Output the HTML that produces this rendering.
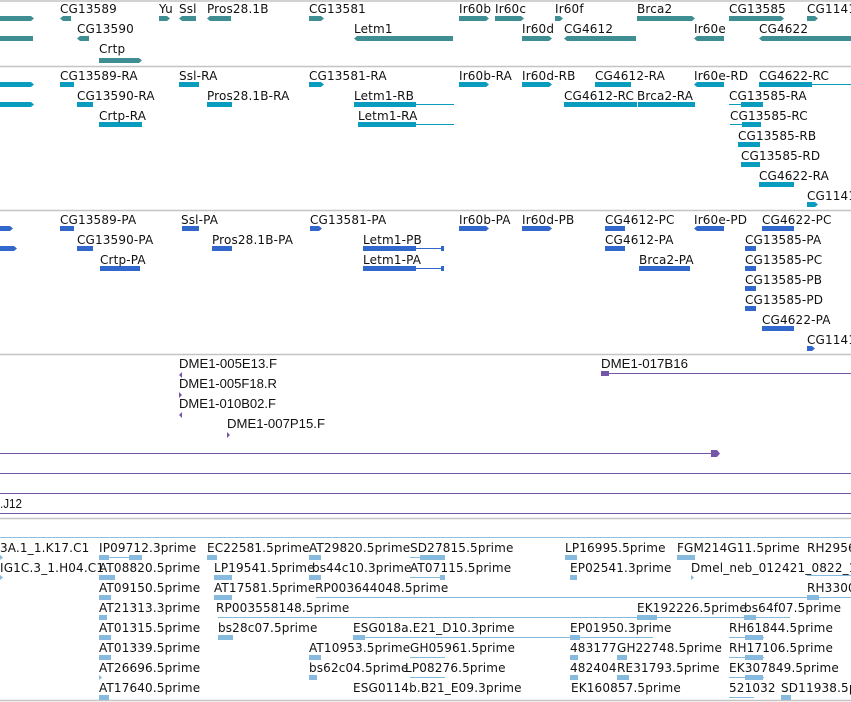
<!DOCTYPE html>
<html><head><meta charset="utf-8"><style>
html,body{margin:0;padding:0;background:#fff;width:851px;height:702px;overflow:hidden}
svg{display:block}
text{font-family:"DejaVu Sans","Liberation Sans",sans-serif;font-size:12px;letter-spacing:0.15px;fill:#111}
.c text{font-family:"Liberation Sans",sans-serif;font-size:12.5px;letter-spacing:0}
</style></head><body>
<svg width="851" height="702" viewBox="0 0 851 702">
<g stroke="#c4c4c4" stroke-width="1.5">
<line x1="0" y1="1" x2="851" y2="1"/><line x1="0" y1="66.5" x2="851" y2="66.5"/>
<line x1="0" y1="210.5" x2="851" y2="210.5"/><line x1="0" y1="354.5" x2="851" y2="354.5"/>
<line x1="0" y1="518.5" x2="851" y2="518.5"/><line x1="0" y1="700.5" x2="851" y2="700.5"/>
</g>
<line x1="0" y1="537.5" x2="851" y2="537.5" stroke="#8fbfdf" stroke-width="1"/>

<g fill="#3f8e94">
<rect x="0" y="16" width="31" height="5"/><polygon points="31,16 34,18.5 31,21"/>
<polygon points="60,18.5 63,16 71,16 71,21 63,21"/>
<rect x="159" y="16" width="8" height="5"/><polygon points="167,16 170,18.5 167,21"/>
<polygon points="179,18.5 182,16 196,16 196,21 182,21"/>
<polygon points="207,18.5 210,16 231,16 231,21 210,21"/>
<polygon points="309,16 321,16 324,18.5 321,21 309,21"/>
<polygon points="459,16 486,16 489,18.5 486,21 459,21"/>
<polygon points="495,16 521,16 524,18.5 521,21 495,21"/>
<polygon points="555,16 560,16 563,18.5 560,21 555,21"/>
<polygon points="637,16 692,16 695,18.5 692,21 637,21"/>
<polygon points="729,16 781,16 784,18.5 781,21 729,21"/>
<polygon points="807,16 815,16 818,18.5 815,21 807,21"/>
<polygon points="77,38.5 80,36 89,36 89,41 80,41"/>
<polygon points="354,38.5 357,36 453,36 453,41 357,41"/>
<polygon points="0,36 33,36 33,41 0,41"/>
<polygon points="522,36 549,36 552,38.5 549,41 522,41"/>
<polygon points="564,38.5 567,36 636,36 636,41 567,41"/>
<polygon points="694,38.5 697,36 724,36 724,41 697,41"/>
<polygon points="759,38.5 762,36 851,36 851,41 762,41"/>
<polygon points="99,58 139,58 142,60.5 139,63 99,63"/>
</g>
<text x="60" y="13">CG13589</text><text x="159" y="13">Yu</text><text x="179" y="13">Ssl</text><text x="207" y="13">Pros28.1B</text><text x="309" y="13">CG13581</text><text x="459" y="13">Ir60b</text><text x="495" y="13">Ir60c</text><text x="555" y="13">Ir60f</text><text x="637" y="13">Brca2</text><text x="729" y="13">CG13585</text><text x="807" y="13">CG1141</text>
<text x="77" y="33">CG13590</text><text x="354" y="33">Letm1</text><text x="522" y="33">Ir60d</text><text x="564" y="33">CG4612</text><text x="694" y="33">Ir60e</text><text x="759" y="33">CG4622</text>
<text x="99" y="53">Crtp</text>

<g fill="#0a9cbf">
<rect x="0" y="82" width="31" height="5"/><polygon points="31,82 34,84.5 31,87"/>
<rect x="60" y="82" width="14" height="5"/>
<rect x="179" y="82" width="20" height="5"/>
<polygon points="309,82 321,82 324,84.5 321,87 309,87"/>
<polygon points="459,82 486,82 489,84.5 486,87 459,87"/>
<polygon points="522,82 549,82 552,84.5 549,87 522,87"/>
<rect x="595" y="82" width="36" height="5"/>
<polygon points="694,84.5 697,82 724,82 724,87 697,87"/>
<rect x="759" y="82" width="53" height="5"/><rect x="812" y="84" width="39" height="1"/>
<rect x="0" y="102" width="31" height="5"/><polygon points="31,102 34,104.5 31,107"/>
<rect x="77" y="102" width="16" height="5"/>
<rect x="207" y="102" width="25" height="5"/>
<rect x="354" y="102" width="62" height="5"/><rect x="416" y="104" width="38" height="1"/>
<rect x="564" y="102" width="73" height="5"/><rect x="638" y="102" width="57" height="5"/>
<rect x="729" y="104" width="12" height="1"/><rect x="741" y="102" width="22" height="5"/>
<rect x="99" y="122" width="43" height="5"/>
<rect x="358" y="122" width="58" height="5"/><rect x="416" y="124" width="38" height="1"/>
<rect x="730" y="124" width="12" height="1"/><rect x="742" y="122" width="19" height="5"/>
<rect x="738" y="142" width="22" height="5"/>
<rect x="741" y="162" width="19" height="5"/>
<rect x="759" y="182" width="35" height="5"/>
<polygon points="807,202 815,202 818,204.5 815,207 807,207"/>
</g>
<text x="60" y="80">CG13589-RA</text><text x="179" y="80">Ssl-RA</text><text x="309" y="80">CG13581-RA</text><text x="459" y="80">Ir60b-RA</text><text x="522" y="80">Ir60d-RB</text><text x="595" y="80">CG4612-RA</text><text x="694" y="80">Ir60e-RD</text><text x="759" y="80">CG4622-RC</text>
<text x="77" y="100">CG13590-RA</text><text x="207" y="100">Pros28.1B-RA</text><text x="354" y="100">Letm1-RB</text><text x="564" y="100">CG4612-RC</text><text x="637" y="100">Brca2-RA</text><text x="729" y="100">CG13585-RA</text>
<text x="99" y="120">Crtp-RA</text><text x="358" y="120">Letm1-RA</text><text x="730" y="120">CG13585-RC</text>
<text x="738" y="140">CG13585-RB</text><text x="741" y="160">CG13585-RD</text><text x="759" y="180">CG4622-RA</text><text x="807" y="200">CG1141</text>

<g fill="#3268cc">
<polygon points="0,226 10,226 13,228.5 10,231 0,231"/>
<rect x="60" y="226" width="14" height="5"/>
<rect x="182" y="226" width="17" height="5"/>
<polygon points="310,226 319,226 322,228.5 319,231 310,231"/>
<polygon points="459,226 486,226 489,228.5 486,231 459,231"/>
<polygon points="522,226 549,226 552,228.5 549,231 522,231"/>
<rect x="605" y="226" width="20" height="5"/>
<polygon points="694,228.5 697,226 724,226 724,231 697,231"/>
<rect x="762" y="226" width="32" height="5"/>
<polygon points="0,246 14,246 17,248.5 14,251 0,251"/>
<rect x="77" y="246" width="16" height="5"/>
<rect x="212" y="246" width="20" height="5"/>
<rect x="363" y="246" width="53" height="5"/><rect x="416" y="248" width="28" height="1"/><rect x="441" y="246" width="3" height="5"/>
<rect x="605" y="246" width="20" height="5"/>
<rect x="745" y="246" width="11" height="5"/>
<rect x="100" y="266" width="40" height="5"/>
<rect x="363" y="266" width="53" height="5"/><rect x="416" y="268" width="28" height="1"/><rect x="441" y="266" width="3" height="5"/>
<rect x="639" y="266" width="51" height="5"/>
<rect x="745" y="266" width="11" height="5"/>
<rect x="745" y="286" width="11" height="5"/>
<rect x="745" y="306" width="11" height="5"/>
<rect x="762" y="326" width="32" height="5"/>
<polygon points="807,346 812,346 815,348.5 812,351 807,351"/>
</g>
<text x="60" y="224">CG13589-PA</text><text x="181" y="224">Ssl-PA</text><text x="310" y="224">CG13581-PA</text><text x="459" y="224">Ir60b-PA</text><text x="522" y="224">Ir60d-PB</text><text x="605" y="224">CG4612-PC</text><text x="694" y="224">Ir60e-PD</text><text x="762" y="224">CG4622-PC</text>
<text x="77" y="244">CG13590-PA</text><text x="212" y="244">Pros28.1B-PA</text><text x="363" y="244">Letm1-PB</text><text x="605" y="244">CG4612-PA</text><text x="745" y="244">CG13585-PA</text>
<text x="100" y="264">Crtp-PA</text><text x="363" y="264">Letm1-PA</text><text x="639" y="264">Brca2-PA</text><text x="745" y="264">CG13585-PC</text>
<text x="745" y="284">CG13585-PB</text><text x="745" y="304">CG13585-PD</text><text x="762" y="324">CG4622-PA</text><text x="807" y="344">CG1141</text>

<g fill="#7656a8">
<polygon points="179,375 182,372 182,378"/>
<polygon points="179,392 182,395 179,398"/>
<polygon points="179,415 182,412 182,418"/>
<polygon points="227,432 230,435 227,438"/>
<rect x="601" y="371" width="8" height="5"/><rect x="609" y="373" width="242" height="1"/>
<rect x="0" y="453" width="712" height="1"/><polygon points="711,450 717,450 720,453.5 717,457 711,457"/>
<rect x="0" y="473" width="851" height="1"/><rect x="0" y="493" width="851" height="1"/><rect x="0" y="513" width="851" height="1"/>
</g>
<g class="c">
<text x="179" y="368" textLength="98" lengthAdjust="spacingAndGlyphs">DME1-005E13.F</text><text x="179" y="388" textLength="98" lengthAdjust="spacingAndGlyphs">DME1-005F18.R</text><text x="179" y="408" textLength="97" lengthAdjust="spacingAndGlyphs">DME1-010B02.F</text><text x="227" y="428" textLength="98" lengthAdjust="spacingAndGlyphs">DME1-007P15.F</text><text x="601" y="368" textLength="87" lengthAdjust="spacingAndGlyphs">DME1-017B16</text><text x="0" y="508" textLength="22" lengthAdjust="spacingAndGlyphs">.J12</text>
</g>

<g fill="#86badf">
<polygon points="0,555 3,557.5 0,560"/><polygon points="0,575 3,577.5 0,580"/>
<rect x="99" y="555" width="10" height="5"/><rect x="109" y="557" width="20" height="1"/><rect x="129" y="555" width="13" height="5"/>
<rect x="99" y="575" width="16" height="5"/>
<rect x="99" y="595" width="12" height="5"/><rect x="99" y="615" width="8" height="5"/><rect x="99" y="635" width="12" height="5"/><rect x="99" y="655" width="12" height="5"/><polygon points="99,675 102,677.5 99,680"/><rect x="99" y="695" width="10" height="5"/>
<rect x="207" y="555" width="10" height="5"/>
<rect x="214" y="575" width="18" height="5"/><rect x="214" y="595" width="18" height="5"/>
<rect x="316" y="597" width="535" height="1"/>
<rect x="218" y="617" width="572" height="1"/><rect x="637" y="615" width="20" height="5"/><rect x="744" y="615" width="12" height="5"/>
<rect x="218" y="635" width="15" height="5"/>
<rect x="309" y="555" width="12" height="5"/><rect x="309" y="575" width="12" height="5"/>
<rect x="410" y="557" width="35" height="1"/><rect x="420" y="555" width="25" height="5"/>
<rect x="410" y="577" width="35" height="1"/><rect x="440" y="575" width="5" height="5"/>
<rect x="353" y="637" width="300" height="1"/><rect x="353" y="635" width="12" height="5"/>
<rect x="309" y="655" width="12" height="5"/><rect x="309" y="675" width="8" height="5"/>
<rect x="410" y="657" width="35" height="1"/><rect x="410" y="677" width="35" height="1"/>
<rect x="565" y="555" width="12" height="5"/><rect x="677" y="555" width="18" height="5"/>
<rect x="570" y="575" width="7" height="5"/><polygon points="691,575 694,577.5 691,580"/>
<rect x="570" y="635" width="10" height="5"/><rect x="570" y="655" width="8" height="5"/><rect x="617" y="655" width="10" height="5"/>
<rect x="570" y="675" width="8" height="5"/><rect x="617" y="675" width="12" height="5"/>
<rect x="729" y="637" width="35" height="1"/><rect x="745" y="635" width="18" height="5"/>
<rect x="729" y="657" width="35" height="1"/><rect x="745" y="655" width="18" height="5"/>
<rect x="729" y="677" width="35" height="1"/><rect x="745" y="675" width="18" height="5"/>
<rect x="729" y="697" width="25" height="1"/><rect x="781" y="695" width="10" height="5"/>
<rect x="807" y="595" width="12" height="5"/><rect x="807" y="575" width="44" height="1"/>
</g>
<text x="0" y="552">3A.1_1.K17.C1</text><text x="99" y="552">IP09712.3prime</text><text x="207" y="552">EC22581.5prime</text><text x="309" y="552">AT29820.5prime</text><text x="410" y="552">SD27815.5prime</text><text x="565" y="552">LP16995.5prime</text><text x="677" y="552">FGM214G11.5prime</text><text x="807" y="552">RH2956</text>
<text x="0" y="572">IG1C.3_1.H04.C1</text><text x="99" y="572">AT08820.5prime</text><text x="214" y="572">LP19541.5prime</text><text x="312" y="572">bs44c10.3prime</text><text x="410" y="572">AT07115.5prime</text><text x="570" y="572">EP02541.3prime</text><text x="691" y="572">Dmel_neb_012421_0822_1</text>
<text x="99" y="592">AT09150.5prime</text><text x="214" y="592">AT17581.5prime</text><text x="315" y="592">RP003644048.5prime</text><text x="807" y="592">RH3300</text>
<text x="99" y="612">AT21313.3prime</text><text x="216" y="612">RP003558148.5prime</text><text x="637" y="612">EK192226.5prime</text><text x="744" y="612">bs64f07.5prime</text>
<text x="99" y="632">AT01315.5prime</text><text x="218" y="632">bs28c07.5prime</text><text x="353" y="632">ESG018a.E21_D10.3prime</text><text x="570" y="632">EP01950.3prime</text><text x="729" y="632">RH61844.5prime</text>
<text x="99" y="652">AT01339.5prime</text><text x="309" y="652">AT10953.5prime</text><text x="410" y="652">GH05961.5prime</text><text x="570" y="652">483177</text><text x="617" y="652">GH22748.5prime</text><text x="729" y="652">RH17106.5prime</text>
<text x="99" y="672">AT26696.5prime</text><text x="309" y="672">bs62c04.5prime</text><text x="405" y="672">LP08276.5prime</text><text x="570" y="672">482404</text><text x="617" y="672">RE31793.5prime</text><text x="729" y="672">EK307849.5prime</text>
<text x="99" y="692">AT17640.5prime</text><text x="353" y="692">ESG0114b.B21_E09.3prime</text><text x="571" y="692">EK160857.5prime</text><text x="729" y="692">521032</text><text x="781" y="692">SD11938.5prime</text>
</svg>
</body></html>
